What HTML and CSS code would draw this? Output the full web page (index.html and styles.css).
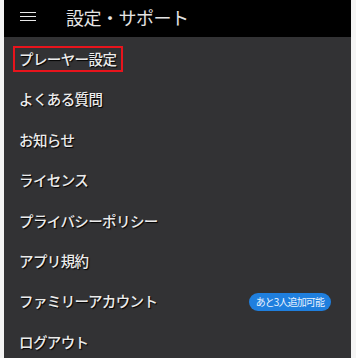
FILE: index.html
```html
<!DOCTYPE html>
<html lang="ja">
<head>
<meta charset="utf-8">
<link rel="stylesheet" href="styles.css">
</head>
<body>
<div class="app">
  <header class="topbar">
    <span class="menu" aria-label="menu"><i></i><i></i><i></i></span>
    <h1 class="title">設定・サポート</h1>
  </header>
  <ul class="list">
    <li class="row"><span class="label selected">プレーヤー設定</span></li>
    <li class="row"><span class="label">よくある質問</span></li>
    <li class="row"><span class="label">お知らせ</span></li>
    <li class="row"><span class="label">ライセンス</span></li>
    <li class="row"><span class="label">プライバシーポリシー</span></li>
    <li class="row"><span class="label">アプリ規約</span></li>
    <li class="row"><span class="label">ファミリーアカウント</span><span class="badge">あと3人追加可能</span></li>
    <li class="row"><span class="label">ログアウト</span></li>
  </ul>
</div>
</body>
</html>
```

FILE: styles.css
```css
html, body {
  margin: 0;
  padding: 0;
  background: #f4f4f4;
  height: 100%;
}
body {
  font-family: "Noto Sans CJK JP", "Noto Sans", sans-serif;
  overflow: hidden;
}
.app {
  margin: 0 5px 0 4px;
  height: 358px;
  background: #323234;
  display: flex;
  flex-direction: column;
}
.topbar {
  height: 37px;
  background: #000;
  display: flex;
  align-items: center;
  flex: none;
}
.menu {
  display: flex;
  flex-direction: column;
  gap: 2.5px;
  width: 16px;
  margin-left: 16px;
  margin-top: -4px;
}
.menu i {
  display: block;
  height: 1.6px;
  background: #e8e8e8;
}
.title {
  margin: 0 0 0 30px;
  font-size: 18px;
  font-weight: 400;
  color: #e4e4e4;
  letter-spacing: -0.5px;
  line-height: 1;
  margin-top: -4px;
}
.list {
  list-style: none;
  margin: 0;
  padding: 2px 0 0;
}
.row {
  height: 40.4px;
  display: flex;
  align-items: center;
  justify-content: space-between;
  padding: 0 20px 0 9px;
}
.label {
  font-size: 14.5px;
  font-weight: 500;
  color: #ececec;
  text-shadow: 1px 1px 1px #000;
  line-height: 1;
  padding: 4px 5px 4px 4px;
  border: 2px solid transparent;
  letter-spacing: -0.6px;
}
.label.selected {
  border-color: #e8141c;
}
.badge {
  background: #1f7fde;
  color: #e8f2ff;
  font-size: 10px;
  line-height: 1;
  padding: 4px 7px;
  border-radius: 9px;
  letter-spacing: -0.9px;
}
```
